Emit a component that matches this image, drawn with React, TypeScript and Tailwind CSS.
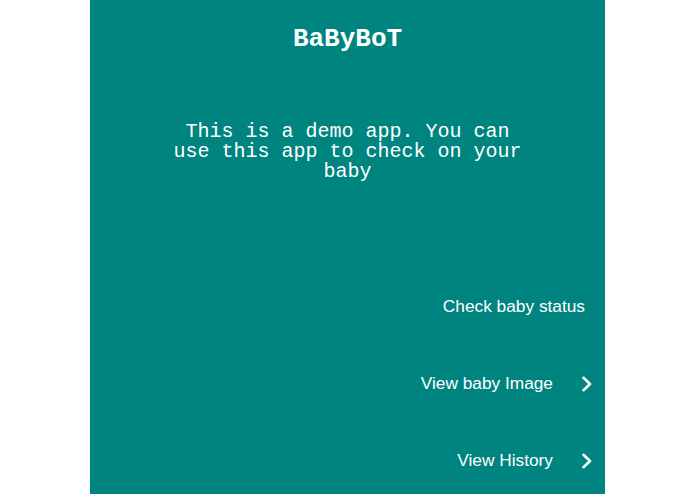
const rows = [
    { label: "Check baby status", chevron: false },
    { label: "View baby Image", chevron: true },
    { label: "View History", chevron: true },
];

function Chevron() {
    return (
        <svg
            aria-hidden="true"
            className="ml-[28px] shrink-0"
            fill="none"
            height="16"
            viewBox="0 0 11 16"
            width="11"
        >
            <polyline
                points="2.5,1.8 9,8 2.5,14.2"
                stroke="white"
                strokeLinecap="round"
                strokeLinejoin="round"
                strokeWidth="2.6"
            />
        </svg>
    );
}

export default function App() {
    return (
        <div className="flex min-h-[494px] w-full justify-center bg-white">
            <main className="flex h-[494px] w-[515px] flex-col overflow-hidden bg-[#00847f] text-white">
                <h1 className="pt-[26px] text-center font-['Liberation_Mono',monospace] text-[26px] font-bold leading-[26px]">
                    BaByBoT
                </h1>
                <p className="mx-auto mt-[70px] w-[360px] text-center font-['Liberation_Mono',monospace] text-[20px] leading-[20px]">
                    This is a demo app. You can use this app to check on your baby
                </p>

                <div className="mt-[86px] flex flex-col">
                    {rows.map((row) => (
                        <div
                            className={`flex h-[77px] items-center justify-end font-['Liberation_Sans',Arial,sans-serif] text-[17.3px] ${row.chevron ? "pr-[13px]" : "pr-[20px]"}`}
                            key={row.label}
                        >
                            <span>{row.label}</span>
                            {row.chevron && <Chevron />}
                        </div>
                    ))}
                </div>
            </main>
        </div>
    );
}
